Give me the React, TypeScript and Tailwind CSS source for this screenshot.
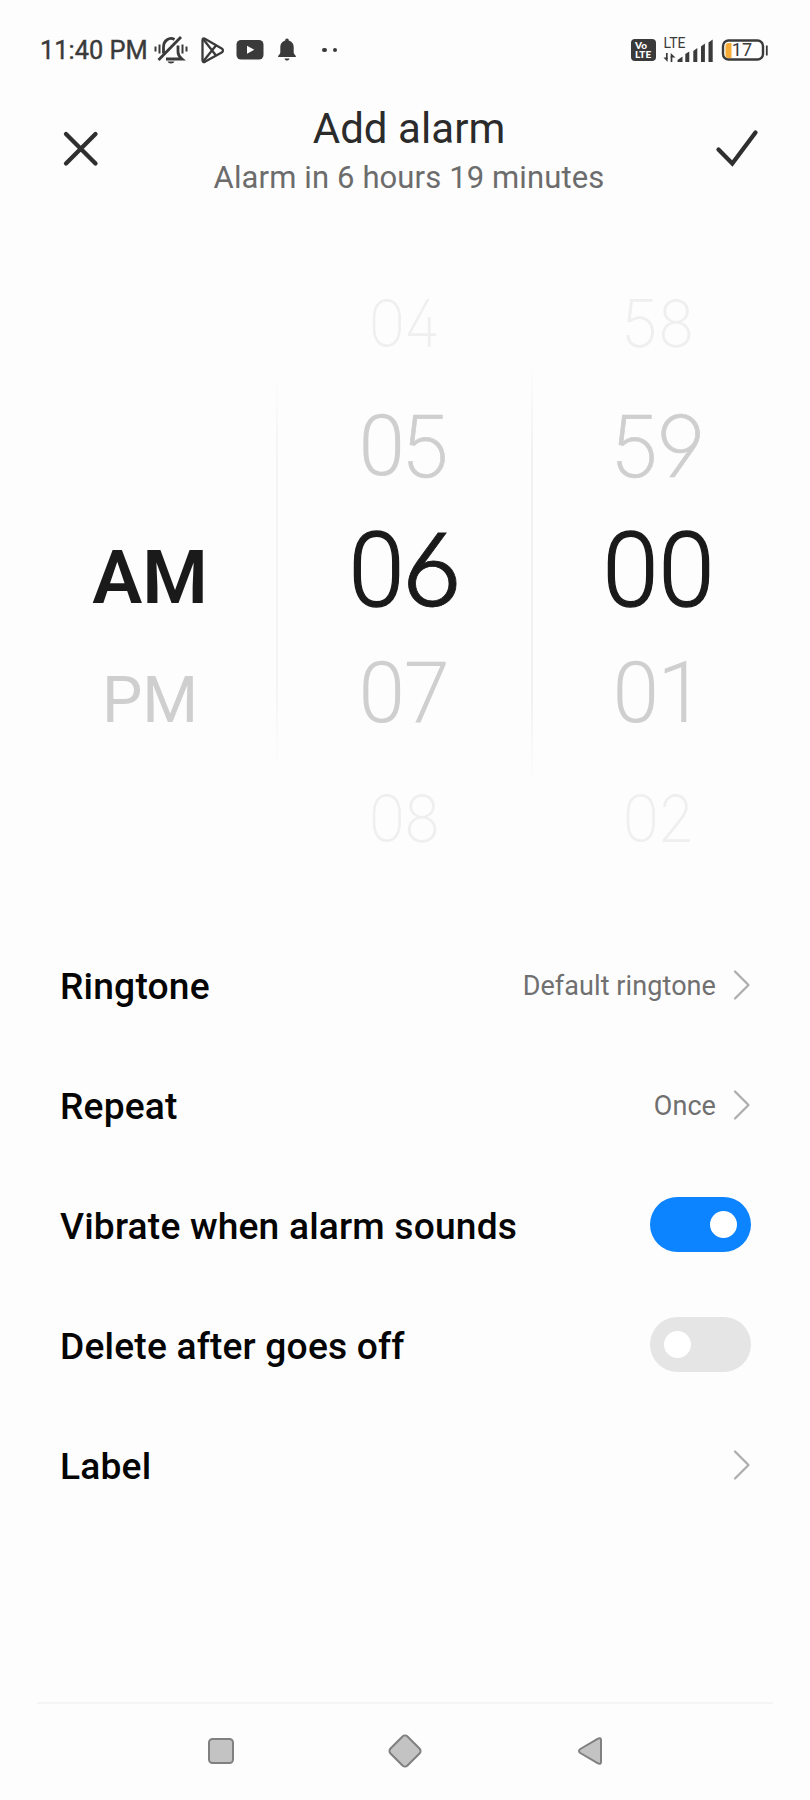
import React from "react";

const digitFace: Record<string, string> = {
  "0": "font-['Roboto'] scale-x-[.98]",
  "1": "font-['Roboto']",
  "2": "font-['Inter'] scale-x-[.92]",
  "4": "font-['Inter'] scale-x-[.9]",
  "5": "font-['Inter'] scale-x-[.98]",
  "6": "font-['Inter'] scale-x-[1.03] scale-y-[.98] -translate-y-[1%]",
  "7": "font-['Roboto'] scale-x-[.97]",
  "8": "font-['Inter'] scale-x-[.93]",
  "9": "font-['Inter'] scale-x-[1.02]",
};

const tiers = {
  far: {
    cell: "w-[36px]",
    type: "text-[65.5px] text-[#efefef]",
    humanist: "font-[100] [-webkit-text-stroke:0.8px_currentColor]",
    geometric: "font-[200]",
  },
  near: {
    cell: "w-[45px]",
    type: "text-[85.5px] text-[#cfcfcf]",
    humanist: "font-[300]",
    geometric: "font-[200] [-webkit-text-stroke:0.7px_currentColor]",
  },
  active: {
    cell: "w-[55.5px]",
    type: "text-[103px] text-[#1a1a1a]",
    humanist: "font-[300] [-webkit-text-stroke:1.3px_currentColor]",
    geometric: "font-[300] [-webkit-text-stroke:0.8px_currentColor]",
  },
};

function Digits({ value, tier }: { value: string; tier: keyof typeof tiers }) {
  const t = tiers[tier];
  return (
    <div className={`flex h-full items-center justify-center pr-[2px] leading-none ${t.type}`}>
      {value.split("").map((d, i) => (
        <span key={i} className={`flex justify-center ${t.cell}`}>
          <span className={`${digitFace[d]} ${"017".includes(d) ? t.humanist : t.geometric} [font-feature-settings:'ss01','tnum']`}>{d}</span>
        </span>
      ))}
    </div>
  );
}

function Wheel({ values }: { values: string[] }) {
  const order: (keyof typeof tiers)[] = ["far", "near", "active", "near", "far"];
  return (
    <div className="grid w-[255px] grid-rows-[123px_124px_122px_126px_124px]">
      {values.map((v, i) => (
        <Digits key={v} value={v} tier={order[i]} />
      ))}
    </div>
  );
}

function Chevron() {
  return (
    <svg className="mb-[2px]" width="18" height="32" viewBox="0 0 18 32" fill="none" stroke="#adadad" strokeWidth="2.200" strokeLinecap="round" strokeLinejoin="round">
      <path d="M2 2.5 15.5 16 2 29.5" />
    </svg>
  );
}

function Toggle({ on }: { on?: boolean }) {
  return (
    <div className={`mb-[3px] flex h-[55px] w-[101px] items-center rounded-full px-[14px] ${on ? "justify-end bg-[#0d84ff]" : "justify-start bg-[#e5e5e5]"}`}>
      <div className="size-[27px] rounded-full bg-white" />
    </div>
  );
}

function Row({ label, children }: { label: string; children: React.ReactNode }) {
  return (
    <div className="flex h-[120px] items-center justify-between">
      <span className="pt-[1px] text-[37.200px] font-medium tracking-[0.180px] text-[#050505]">{label}</span>
      {children}
    </div>
  );
}

function Value({ text }: { text?: string }) {
  return (
    <div className="flex items-center gap-[17px] text-[27px] tracking-[0.080px] text-[#707070]">
      {text && <span>{text}</span>}
      <Chevron />
    </div>
  );
}

function StatusBar() {
  return (
    <div className="flex h-[100px] items-center pl-[40px] pr-[42px] text-[#3a3a3a]">
      <span className="w-[114px] whitespace-nowrap text-[25.4px] font-[400] [-webkit-text-stroke:0.4px_currentColor]">11:40 PM</span>
      <svg width="34" height="30" viewBox="154 35 34 30" fill="none" stroke="currentColor" strokeWidth="2.800" strokeLinecap="butt">
        <path d="M163.500 53.500V47a7.500 8.500 0 0 1 11-7.500M178 45.500V52c0 3 1.500 5 4 7H166" />
        <path d="M158.500 60 181 37" />
        <path d="M159.500 44.500v9M155.500 46.500v5M182.500 44.500v9M186.500 46.500v5" strokeWidth="2" />
        <path d="M167.500 61.500h7a3.600 2.500 0 0 1-7 0z" fill="currentColor" stroke="none" />
      </svg>
      <svg className="ml-[12px]" width="26" height="28" viewBox="200 35 26 28" fill="none" stroke="currentColor" strokeWidth="2.300" strokeLinejoin="round">
        <path d="M202.500 39.500v19.500c0 2 1 2.500 2.800 1.600l16.400-9.200c1.700-1 1.700-2.800 0-3.800L205.300 38c-1.800-1-2.800-.5-2.800 1.500z" />
        <path d="M203.500 38.500 216 54.500M203.500 60 216 44.500" />
      </svg>
      <svg className="ml-[10px]" width="28" height="20" viewBox="0 0 28 20">
        <rect x=".5" width="27" height="19.500" rx="4.500" fill="currentColor" />
        <path d="M11 5.700v8l7.300-4z" fill="#fff" />
      </svg>
      <svg className="ml-[13px]" width="20" height="24" viewBox="0 0 20 24" fill="currentColor">
        <path d="M10 .5c1.300 0 1.800.9 1.800 2C15 3.400 16.700 6 16.700 9v5.500c0 1.800 2.300 2.500 2.300 4.500H1c0-2 2.300-2.700 2.300-4.500V9c0-3 1.700-5.600 4.900-6.500 0-1.100.5-2 1.800-2z" />
        <path d="M7.500 20.500h5c-.3 1.500-1.300 2-2.500 2s-2.200-.5-2.500-2z" />
      </svg>
      <div className="ml-[25px] flex gap-[6px]">
        <div className="size-[4.500px] rounded-full bg-current" />
        <div className="size-[4.500px] rounded-full bg-current" />
      </div>
      <div className="ml-auto flex items-center">
        <div className="flex h-[22px] w-[25px] flex-col justify-center rounded-[4px] bg-[#3a3a3a] pl-[4px] font-['Lato'] text-[10px] leading-[9px] font-black text-white">
          <span>Vo</span>
          <span>LTE</span>
        </div>
        <svg className="ml-[7px]" width="51" height="28" viewBox="663 35 51 28" fill="currentColor">
          <text x="663.500" y="46.800" className="font-['Roboto'] text-[14px]">LTE</text>
          <path d="M666.800 52v6M671.500 61v-6" stroke="currentColor" strokeWidth="1.700" />
          <path d="M663.500 56.500h4.100V61zM670.700 56.500V52l4.800 4.500zM677.500 61v-2l5-3.500V61zM685.300 61v-8l4-2.500V61zM693.300 61V50l4-3v14zM701 61V45.500l3.900-3V61zM708.500 61V41.500l4.200-3V61z" />
        </svg>
        <svg className="ml-[7px]" width="47" height="24" viewBox="721 38 47 24" fill="none">
          <path d="M731.500 43v15h-3a3 3 0 0 1-3-3v-9a3 3 0 0 1 3-3z" fill="#f5ab35" />
          <rect x="723" y="40.500" width="40" height="19" rx="5.500" stroke="#3a3a3a" strokeWidth="2.400" />
          <path d="M766.800 45.500v10" stroke="#3a3a3a" strokeWidth="1.800" />
          <text x="731.800" y="56.200" className="fill-[#3a3a3a] font-['Roboto'] text-[18px]">17</text>
        </svg>
      </div>
    </div>
  );
}

export default function App() {
  return (
    <div className="flex h-[1800px] w-[810px] flex-col bg-[#fdfdfd] font-['Roboto',sans-serif]">
      <StatusBar />
      <header className="flex h-[162px] items-start justify-between pl-[62px] pr-[50px]">
        <svg className="mt-[30px]" width="37" height="37" viewBox="0 0 37 37" stroke="#2f2f2f" strokeWidth="4.300" strokeLinecap="round">
          <path d="M4 4 33.500 33.500M33.500 4 4 33.500" />
        </svg>
        <div className="flex flex-col items-center pl-[4px]">
          <h1 className="mt-[5px] text-[42px] leading-[48px] tracking-[0.050px] text-[#2b2b2b]">Add alarm</h1>
          <p className="text-[31px] leading-[50px] tracking-[0.120px] text-[#6c6c6c]">Alarm in 6 hours 19 minutes</p>
        </div>
        <svg className="mt-[28px]" width="45" height="42" viewBox="0 0 45 42" fill="none" stroke="#2f2f2f" strokeWidth="4.300" strokeLinecap="round">
          <path d="M3.500 21.500 17.300 35.500 40.500 4.500" />
        </svg>
      </header>
      <main className="flex h-[619px] pl-[22px]">
        <div className="grid w-[254px] grid-rows-[253px_124px_123px] pl-[2px] text-center leading-[124px]">
          <span className="row-start-2 text-[75px] font-semibold text-[#1a1a1a]">AM</span>
          <span className="row-start-3 text-[64px] text-[#cfcfcf]">PM</span>
        </div>
        <div className="mt-[108px] h-[400px] w-[2px] bg-[linear-gradient(transparent,#f5f5f5_20%,#f5f5f5_80%,transparent)]" />
        <Wheel values={["04", "05", "06", "07", "08"]} />
        <div className="mt-[100px] -mr-[1px] -ml-[2px] h-[424px] w-[2px] bg-[linear-gradient(transparent,#f2f2f2_20%,#f2f2f2_80%,transparent)]" />
        <Wheel values={["58", "59", "00", "01", "02"]} />
      </main>
      <section className="mt-[45px] flex flex-col pl-[60px] pr-[59px]">
        <Row label="Ringtone"><Value text="Default ringtone" /></Row>
        <Row label="Repeat"><Value text="Once" /></Row>
        <Row label="Vibrate when alarm sounds"><Toggle on /></Row>
        <Row label="Delete after goes off"><Toggle /></Row>
        <Row label="Label"><Value /></Row>
      </section>
      <nav className="mx-[37px] mt-auto flex h-[98px] justify-center gap-[148px] border-t-2 border-[#f5f5f5] pt-[27px]">
        <svg width="36" height="40" viewBox="0 0 36 40" fill="#c3c3c3" stroke="#808080" strokeWidth="2">
          <rect x="6" y="8" width="24" height="24" rx="3.500" />
        </svg>
        <svg width="36" height="40" viewBox="0 0 36 40" fill="#c3c3c3" stroke="#808080" strokeWidth="2">
          <rect x="6" y="8" width="24" height="24" rx="3.500" transform="rotate(45 18 20)" />
        </svg>
        <svg width="36" height="40" viewBox="-2 0 36 40" fill="#c3c3c3" stroke="#808080" strokeWidth="2" strokeLinejoin="round">
          <path d="M28 9v22c0 1.800-1.500 2.400-3 1.300L7.300 22c-1.700-1.100-1.700-2.900 0-4L25 7.700c1.500-1.100 3-.5 3 1.300z" />
        </svg>
      </nav>
    </div>
  );
}
